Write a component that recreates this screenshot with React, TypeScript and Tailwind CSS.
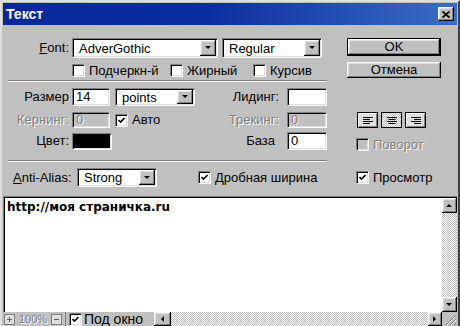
import React from 'react';

const raised =
    'bg-[#c0c0c0] shadow-[inset_-1px_-1px_0_#000,inset_1px_1px_0_#fff,inset_-2px_-2px_0_#808080,inset_2px_2px_0_#dfdfdf]';
const sunken =
    'border border-t-[#808080] border-l-[#808080] border-b-white border-r-white shadow-[inset_1px_1px_0_#000,inset_-1px_-1px_0_#dfdfdf]';
const dimText = 'text-[#808080] [text-shadow:1px_1px_0_#fff]';
const dither = 'bg-[repeating-conic-gradient(#c0c0c0_0_25%,#fff_0_50%)] bg-[length:2px_2px]';

function Arrow({ dir }: { dir: 'down' | 'up' | 'left' | 'right' }) {
    const pts = {
        down: '0,0 6,0 3,3',
        up: '0,3 6,3 3,0',
        left: '3,0 3,6 0,3',
        right: '0,0 0,6 3,3',
    }[dir];
    const vertical = dir === 'down' || dir === 'up';
    return (
        <svg width={vertical ? 7 : 4} height={vertical ? 4 : 7} viewBox={vertical ? '0 0 7 4' : '0 0 4 7'}>
            <polygon points={pts} fill="#000" />
        </svg>
    );
}

function Combo({ value, width }: { value: string; width: string }) {
    return (
        <div className={`${sunken} ${width} h-full bg-white flex items-center p-[1px]`}>
            <span className="flex-1 pl-[5px] leading-none">{value}</span>
            <div className={`${raised} w-[16px] h-full flex items-center justify-center`}>
                <Arrow dir="down" />
            </div>
        </div>
    );
}

function Check({ checked, disabled }: { checked?: boolean; disabled?: boolean }) {
    return (
        <div
            className={`${sunken} w-[13px] h-[13px] flex items-center justify-center shrink-0 ${
                disabled ? 'bg-[#c0c0c0]' : 'bg-white'
            }`}
        >
            {checked && (
                <svg width="7" height="7" viewBox="0 0 7 7">
                    <path d="M0.5 3 L2.5 5 L6.5 1" stroke="#000" strokeWidth="1.6" fill="none" />
                </svg>
            )}
        </div>
    );
}

function Input({ value, width, disabled }: { value: string; width: string; disabled?: boolean }) {
    return (
        <div
            className={`${sunken} ${width} h-full flex items-center pl-[3px] ${
                disabled ? `bg-[#c0c0c0] ${dimText}` : 'bg-white'
            }`}
        >
            {value}
        </div>
    );
}

function Separator() {
    return <div className="h-[2px] w-[319px] border-t border-t-[#808080] border-b border-b-white" />;
}

function AlignIcon({ mode }: { mode: 'left' | 'center' | 'right' }) {
    const widths = [10, 7, 10, 7];
    return (
        <svg width="12" height="9" viewBox="0 0 12 9">
            {widths.map((w, i) => {
                const x = mode === 'left' ? 1 : mode === 'right' ? 11 - w : (12 - w) / 2;
                return <rect key={i} x={x} y={1 + i * 2} width={w} height="1" fill="#000" />;
            })}
        </svg>
    );
}

export default function App() {
    return (
        <div className="w-[460px] h-[326px] overflow-hidden bg-[#c0c0c0] border-l-2 border-t-2 border-r-2 border-l-[#dfdfdf] border-t-[#dfdfdf] border-r-[#404040] pl-[1px] pt-[1px] pr-[1px] flex flex-col font-['Liberation_Sans',Arial,sans-serif] text-[13px] text-black">
            {/* title bar */}
            <div className="h-[22px] shrink-0 flex items-center justify-between bg-[linear-gradient(90deg,#08289a_0%,#0a2e9e_45%,#3c6cc6_100%)] pl-[3px] pr-[3px]">
                <span className="text-white font-bold text-[14px]">Текст</span>
                <div className={`${raised} w-[16px] h-[14px] flex items-center justify-center`}>
                    <svg width="8" height="7" viewBox="0 0 8 7">
                        <path d="M0.5 0.5 L7.5 6.5 M7.5 0.5 L0.5 6.5" stroke="#000" strokeWidth="1.8" />
                    </svg>
                </div>
            </div>

            {/* top area */}
            <div className="flex shrink-0">
                <div className="ml-[5px] w-[320px] flex flex-col">
                    <div className="mt-[13px] h-[20px] flex items-center">
                        <span className="w-[61px] text-right">
                            <span className="underline">F</span>ont:
                        </span>
                        <div className="ml-[3px] h-full">
                            <Combo value="AdverGothic" width="w-[146px]" />
                        </div>
                        <div className="ml-[4px] h-full">
                            <Combo value="Regular" width="w-[100px]" />
                        </div>
                    </div>
                    <div className="mt-[6px] h-[13px] flex items-center pl-[64px]">
                        <div className="w-[98px] flex items-center gap-[4px]">
                            <Check />
                            <span>Подчеркн-й</span>
                        </div>
                        <div className="w-[83px] flex items-center gap-[4px]">
                            <Check />
                            <span>Жирный</span>
                        </div>
                        <div className="flex items-center gap-[4px]">
                            <Check />
                            <span>Курсив</span>
                        </div>
                    </div>
                    <div className="mt-[3px]">
                        <Separator />
                    </div>
                    <div className="mt-[6px] h-[18px] flex items-center">
                        <div className="w-[187px] h-full flex items-center">
                            <span className="w-[61px] text-right">Размер</span>
                            <div className="ml-[3px] h-full">
                                <Input value="14" width="w-[38px]" />
                            </div>
                            <div className="ml-[5px] h-full">
                                <Combo value="points" width="w-[80px]" />
                            </div>
                        </div>
                        <span className="w-[84px] text-right">Лидинг:</span>
                        <div className="ml-[8px] h-full">
                            <Input value="" width="w-[40px]" />
                        </div>
                    </div>
                    <div className="mt-[6px] h-[16px] flex items-center">
                        <div className="w-[187px] h-full flex items-center">
                            <span className={`w-[61px] text-right ${dimText}`}>Кернинг:</span>
                            <div className="ml-[3px] h-full">
                                <Input value="0" width="w-[38px]" disabled />
                            </div>
                            <div className="ml-[5px] flex items-center gap-[4px]">
                                <Check checked />
                                <span>Авто</span>
                            </div>
                        </div>
                        <span className={`w-[84px] text-right ${dimText}`}>Трекинг:</span>
                        <div className="ml-[8px] h-full">
                            <Input value="0" width="w-[40px]" disabled />
                        </div>
                    </div>
                    <div className="mt-[4px] h-[18px] flex items-center">
                        <div className="w-[187px] h-full flex items-center">
                            <span className="w-[61px] text-right">Цвет:</span>
                            <div className={`${sunken} ml-[3px] w-[40px] h-[17px] bg-black`} />
                        </div>
                        <span className="w-[80px] text-right">База</span>
                        <div className="ml-[12px] h-full">
                            <Input value="0" width="w-[40px]" />
                        </div>
                    </div>
                    <div className="mt-[10px]">
                        <Separator />
                    </div>
                </div>

                <div className="ml-[19px] w-[94px] flex flex-col">
                    <div className="mt-[13px] h-[18px] border border-black">
                        <div className={`${raised} w-full h-full flex items-center justify-center`}>OK</div>
                    </div>
                    <div className={`${raised} mt-[6px] h-[16px] flex items-center justify-center`}>Отмена</div>
                    <div className="mt-[34px] ml-[10px] flex gap-[3px]">
                        {(['left', 'center', 'right'] as const).map((m) => (
                            <div
                                key={m}
                                className={`w-[21px] h-[16px] border border-black flex items-center justify-center ${
                                    m === 'center'
                                        ? dither
                                        : 'bg-[#dfdfdf] shadow-[inset_1px_1px_0_#fff,inset_-1px_-1px_0_#808080]'
                                }`}
                            >
                                <AlignIcon mode={m} />
                            </div>
                        ))}
                    </div>
                    <div className="mt-[7px] ml-[9px] flex items-center gap-[4px]">
                        <Check disabled />
                        <span className={dimText}>Поворот</span>
                    </div>
                </div>
            </div>

            {/* anti-alias row */}
            <div className="mt-[6px] h-[19px] shrink-0 flex items-center pl-[10px]">
                <span className="w-[64px]">
                    <span className="underline">A</span>nti-Alias:
                </span>
                <div className="h-full">
                    <Combo value="Strong" width="w-[80px]" />
                </div>
                <div className="ml-[41px] w-[158px] flex items-center gap-[4px]">
                    <Check checked />
                    <span>Дробная ширина</span>
                </div>
                <div className="flex items-center gap-[4px]">
                    <Check checked />
                    <span>Просмотр</span>
                </div>
            </div>

            {/* text area */}
            <div className="mt-[9px] h-[116px] shrink-0 flex border-t border-t-[#808080] border-l border-l-[#808080] shadow-[inset_1px_1px_0_#000]">
                <div className="flex-1 bg-white ml-[1px] mt-[1px] pl-[2px] pt-[3px] font-['DejaVu_Sans',Verdana,sans-serif] font-bold text-[12px] leading-[13px]">
                    http://моя страничка.ru
                </div>
                <div className="w-[15px] mt-[1px] flex flex-col">
                    <div className={`${raised} h-[15px] flex items-center justify-center`}>
                        <Arrow dir="up" />
                    </div>
                    <div className={`flex-1 ${dither}`} />
                    <div className={`${raised} h-[15px] flex items-center justify-center`}>
                        <Arrow dir="down" />
                    </div>
                </div>
            </div>

            {/* status bar */}
            <div className="h-[14px] shrink-0 flex items-center">
                <div className="ml-[1px] w-[11px] h-[11px] border border-[#808080] bg-[#dfdfdf] flex items-center justify-center">
                    <svg width="5" height="5" viewBox="0 0 5 5">
                        <path d="M2.5 0 V5 M0 2.5 H5" stroke="#606060" strokeWidth="1" />
                    </svg>
                </div>
                <span className={`ml-[4px] w-[32px] text-[11px] leading-none ${dimText}`}>100%</span>
                <div className="w-[11px] h-[11px] border border-[#808080] bg-[#dfdfdf] flex items-center justify-center">
                    <div className="w-[5px] h-[1px] bg-[#606060]" />
                </div>
                <div className="ml-[3px] w-[1px] h-[14px] bg-[#808080]" />
                <div className="ml-[3px] flex items-center gap-[2px]">
                    <Check checked />
                    <span className="text-[14px] leading-none">Под окно</span>
                </div>
                <div className="ml-auto flex items-center h-full w-[303px]">
                    <div className={`${raised} w-[17px] h-full flex items-center justify-center`}>
                        <Arrow dir="left" />
                    </div>
                    <div className={`flex-1 h-full ${dither}`} />
                    <div className={`${raised} w-[14px] h-full flex items-center justify-center`}>
                        <Arrow dir="right" />
                    </div>
                    <div className="w-[15px] h-full flex items-end justify-end">
                        <svg width="13" height="13" viewBox="0 0 13 13">
                            <path d="M12 2 L2 12 M12 6 L6 12 M12 10 L10 12" stroke="#808080" strokeWidth="1" />
                            <path d="M12 3 L3 12 M12 7 L7 12" stroke="#fff" strokeWidth="1" />
                        </svg>
                    </div>
                </div>
            </div>
        </div>
    );
}
